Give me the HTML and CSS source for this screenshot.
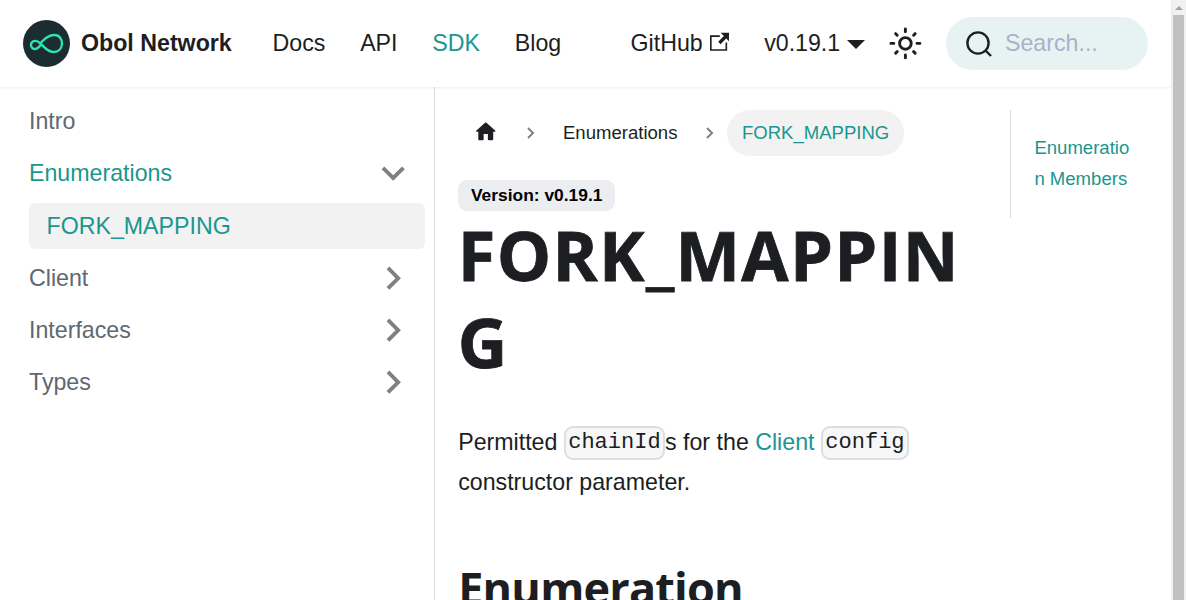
FILE: index.html
```html
<!DOCTYPE html>
<html lang="en">
<head>
<meta charset="utf-8">
<title>FORK_MAPPING | Obol Network</title>
<link rel="stylesheet" href="styles.css">
</head>
<body>
<div class="window">
  <div class="page">
    <header class="navbar">
      <a class="brand">
        <svg class="logo" viewBox="0 0 47 47"><circle cx="23.5" cy="23.5" r="23.5" fill="#1b2d32"/><path d="M17.500 23C20.500 20.500 23.500 15.200 31 15C36.500 14.900 39.300 19.300 39 24C38.600 29.500 34.500 32 30.500 32C24 32 20.700 26.200 17.500 23.500C15.500 21.700 14 20.800 12 20.900C9.300 21 7.900 23 8 25.200C8.100 27.500 10 29.200 12.500 29C15 28.800 16.500 26.500 18.200 24.500" fill="none" stroke="#2fe4ab" stroke-width="2.400"/></svg>
        <b class="brand-name">Obol Network</b>
      </a>
      <nav class="links">
        <a>Docs</a><a>API</a><a class="active">SDK</a><a>Blog</a>
      </nav>
      <div class="tools">
        <a class="github">GitHub<svg class="external" viewBox="0 0 24 24"><path d="M21 13v10h-21v-19h12v2h-10v15h17v-8h2zm3-12h-10.988l4.035 4-6.977 7.070 2.828 2.828 6.977-7.070 4.125 4.172v-11z"/></svg></a>
        <a class="version">v0.19.1<span class="caret"></span></a>
        <svg class="sun" viewBox="0 0 24 24"><circle cx="12" cy="12" r="4"/><path d="M2 12h2M20 12h2M12 2v2M12 20v2M5.280 5.280l1.060 1.060M17.660 17.660l1.060 1.060M18.720 5.280l-1.060 1.060M6.340 17.660l-1.060 1.060"/></svg>
        <div class="search"><svg class="lens" viewBox="0 0 26 26"><circle cx="12" cy="12" r="10.600"/><path d="M19.500 19.500L25 25"/></svg><span>Search...</span></div>
      </div>
    </header>
    <div class="main">
      <aside class="sidebar">
        <a class="item">Intro</a>
        <a class="item active">Enumerations<svg class="chevron" viewBox="0 0 24 24"><path d="M6 9.400L7.410 8L12 12.580L16.590 8L18 9.400L12 15.410z"/></svg></a>
        <a class="item child active">FORK_MAPPING</a>
        <a class="item low">Client<svg class="chevron" viewBox="0 0 24 24"><path d="M8.590 16.590L13.170 12L8.590 7.410L10 6l6 6-6 6z"/></svg></a>
        <a class="item low">Interfaces<svg class="chevron" viewBox="0 0 24 24"><path d="M8.590 16.590L13.170 12L8.590 7.410L10 6l6 6-6 6z"/></svg></a>
        <a class="item low">Types<svg class="chevron" viewBox="0 0 24 24"><path d="M8.590 16.590L13.170 12L8.590 7.410L10 6l6 6-6 6z"/></svg></a>
      </aside>
      <article class="content">
        <nav class="crumbs">
          <svg class="home" viewBox="0 0 24 24"><path d="M10 19v-5h4v5c0 .55.45 1 1 1h3c.55 0 1-.45 1-1v-7h1.700c.46 0 .68-.57.33-.87L12.670 3.600c-.38-.34-.96-.34-1.340 0l-8.360 7.530c-.34.3-.13.87.33.87H5v7c0 .55.45 1 1 1h3c.55 0 1-.45 1-1z"/></svg>
          <svg class="sep" viewBox="0 0 8 12"><path d="M1 1l5 5-5 5"/></svg>
          <span class="crumb">Enumerations</span>
          <svg class="sep" viewBox="0 0 8 12"><path d="M1 1l5 5-5 5"/></svg>
          <span class="crumb current">FORK_MAPPING</span>
        </nav>
        <span class="badge">Version: v0.19.1</span>
        <h1 class="title">FORK_MAPPING</h1>
        <p class="text">Permitted <code>chainId</code>s for the <a class="active">Client</a> <code>config</code> constructor parameter.</p>
        <h2 class="subtitle">Enumeration</h2>
      </article>
      <aside class="toc"><a>Enumeration Members</a></aside>
    </div>
  </div>
  <div class="scrollbar"><div class="arrow"></div><div class="thumb"></div></div>
</div>
</body>
</html>
```
FILE: styles.css
```css
* { box-sizing: border-box; }
body { margin: 0; background: #fff; color: #1c1e21; font-family: "Liberation Sans", Arial, sans-serif; font-size: 23.2px; }
.window { display: flex; height: 600px; overflow: hidden; }
.page { width: 1171px; display: flex; flex-direction: column; }
.active { color: #1a968e; }
.navbar { flex: none; height: 87px; padding: 0 23px; display: flex; align-items: center; box-shadow: 0 1px 2px rgba(0,0,0,.07); z-index: 1; }
.brand { display: flex; align-items: center; gap: 11px; width: 232px; }
.logo { width: 47px; height: 47px; flex: none; }
.brand-name { white-space: nowrap; }
.links { display: flex; gap: 34.800px; padding-left: 17.500px; }
.tools { margin-left: auto; display: flex; align-items: center; }
.github { display: flex; align-items: center; margin-right: 34.800px; }
.external { width: 19.600px; height: 19.600px; margin: -3px 0 0 7px; fill: #1c1e21; }
.version { display: flex; align-items: center; gap: 7px; margin-right: 23px; }
.caret { border: 9.300px solid transparent; border-top-color: #1c1e21; border-bottom: 0; margin-top: 2px; }
.sun { width: 34.800px; height: 34.800px; margin-right: 23px; fill: none; stroke: #1c1e21; stroke-width: 2; stroke-linecap: round; }
.search { width: 202px; height: 53px; border-radius: 27px; background: #e7f3f3; color: #a9b2c8; display: flex; align-items: center; gap: 13px; padding-left: 20px; }
.lens { width: 26px; height: 26px; fill: none; stroke: #1c1e21; stroke-width: 2.400; }
.main { flex: 1; display: flex; min-height: 0; }
.sidebar { width: 435px; flex: none; border-right: 1px solid #dadde1; padding: 12px 9px 0 11px; display: flex; flex-direction: column; gap: 6px; }
.item { height: 46px; display: flex; align-items: center; justify-content: space-between; padding: 0 8.500px 2px 18px; color: #606770; }
.item.active { color: #1a968e; }
.chevron { width: 46.400px; height: 46.400px; fill: #808080; margin-top: 2px; }
.child { margin-left: 18px; padding: 0 0 0 17.500px; background: #f2f2f2; border-radius: 6px; }
.low { padding-bottom: 0; }
.low .chevron { margin-top: 1px; }
.content { width: 552px; flex: none; padding: 23px 0 0 23.200px; }
.crumbs { display: flex; align-items: center; height: 46px; font-size: 18.560px; color: #1c1e21; }
.home { width: 25.500px; height: 25.500px; margin: -2px 28px 0 15px; fill: #1c1e21; }
.sep { width: 8px; height: 12px; fill: none; stroke: #808080; stroke-width: 2; }
.crumb { margin: 0 28.500px 0 28.300px; }
.crumb.current { height: 46px; line-height: 46px; padding: 0 15px; margin: 0 0 0 13px; border-radius: 23px; background: #f2f2f2; color: #1a968e; }
.badge { display: block; width: 157px; height: 31px; margin-top: 24px; border-radius: 9px; background: #ebedf0; color: #000; font-size: 17.400px; font-weight: bold; line-height: 31px; text-align: center; }
.title { margin: 0 0 0 -.5px; font: bold 68.500px/87px "Open Sans", sans-serif; letter-spacing: 1.350px; overflow-wrap: break-word; -webkit-text-stroke: .8px #1c1e21; }
.text { margin: 38px 0 0; line-height: 38.500px; }
.text code { font-family: "Liberation Mono", monospace; font-size: 22.040px; background: #f6f7f8; border: 2px solid #dcdee0; border-radius: 9px; padding: 2.300px; vertical-align: 1.500px; }
.subtitle { margin: 57px 0 0; font: bold 45px/58px "Open Sans", sans-serif; letter-spacing: -.8px; }
.toc { width: 138px; height: 108px; margin: 23px 0 0 22.800px; border-left: 1px solid #dadde1; padding: 22px 18px 0 23.600px; color: #1a968e; font-size: 18.560px; line-height: 31px; overflow-wrap: anywhere; }
.scrollbar { width: 15px; background: #f1f1f1; padding: 6px 2px 0; display: flex; flex-direction: column; align-items: center; gap: 5px; }
.arrow { border: 4px solid transparent; border-bottom-color: #a3a3a3; border-top: 0; }
.thumb { width: 11px; flex: 1; background: #c1c1c1; }
```
